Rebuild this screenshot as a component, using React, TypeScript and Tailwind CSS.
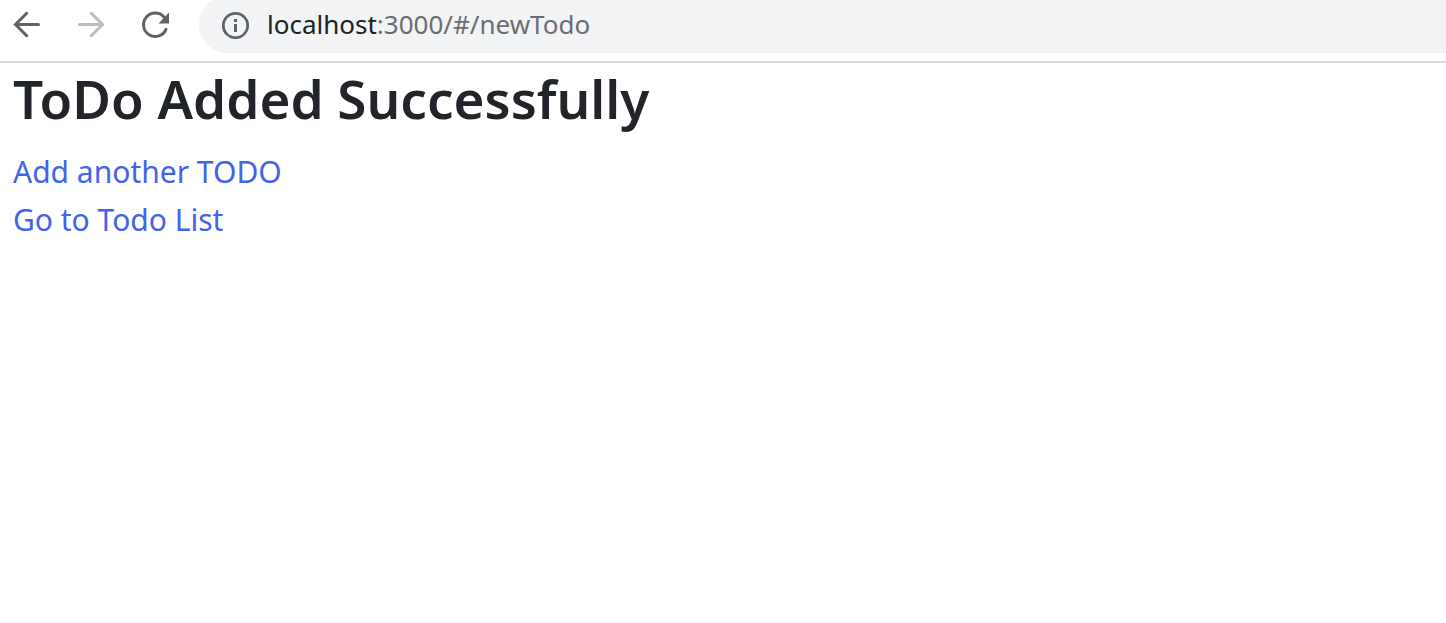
import React from "react";

function BackIcon() {
  return (
    <svg width="32" height="32" viewBox="0 0 32 32" fill="none" stroke="currentColor" strokeWidth="3" strokeLinecap="round" aria-hidden="true">
      <path d="M27.500 16.500H4.500M15.700 5.300L4.500 16.500l11.200 11.200" />
    </svg>
  );
}

function ForwardIcon() {
  return (
    <svg width="32" height="32" viewBox="0 0 32 32" fill="none" stroke="currentColor" strokeWidth="3" strokeLinecap="round" aria-hidden="true">
      <path d="M4.500 16.500h23M16.300 5.300L27.500 16.500L16.300 27.700" />
    </svg>
  );
}

function ReloadIcon() {
  return (
    <svg width="32" height="32" viewBox="0 0 32 32" fill="none" aria-hidden="true">
      <path d="M27 21.300A11.700 11.700 0 1 1 25 9" stroke="currentColor" strokeWidth="3" strokeLinecap="round" />
      <path d="M30 4.500V15.500H19.500z" fill="currentColor" />
    </svg>
  );
}

function InfoIcon() {
  return (
    <svg width="28" height="28" viewBox="0 0 28 28" fill="none" aria-hidden="true">
      <circle cx="14.500" cy="14.500" r="12.200" stroke="currentColor" strokeWidth="2.800" />
      <path d="M13 8h3v3h-3zM13 13h3v8h-3z" fill="currentColor" />
    </svg>
  );
}

export default function App() {
  return (
    <div className="min-h-screen overflow-hidden bg-white font-['Segoe_UI','Noto_Sans',sans-serif]">
      <header className="flex items-start border-b-2 border-[#dadce0] pb-2 pl-[11px]">
        <nav aria-label="Browser" className="flex gap-8 pt-2 pr-7 text-[#5f6368]">
          <button type="button" aria-label="Back">
            <BackIcon />
          </button>
          <button type="button" aria-label="Forward" disabled className="text-[#babcbe]">
            <ForwardIcon />
          </button>
          <button type="button" aria-label="Reload">
            <ReloadIcon />
          </button>
        </nav>
        <div className="-mt-1 flex h-[57px] flex-1 items-center gap-[18px] rounded-l-full bg-[#f1f3f4] pl-[22px] text-[26px] text-[#6b6e71]">
          <button type="button" aria-label="View site information" className="text-[#5f6368]">
            <InfoIcon />
          </button>
          <p className="whitespace-nowrap">
            <span className="text-[#202124]">localhost</span>:3000/#/newTodo
          </p>
        </div>
      </header>
      <main className="px-[13px] pt-[3px]">
        <h1 className="mb-4 text-[53px] leading-[66px] font-semibold text-[#212529]">
          ToDo Added Successfully
        </h1>
        <ul className="text-[30px] leading-[48px] text-[#4263eb]">
          <li>
            <a href="#/newTodo">Add another TODO</a>
          </li>
          <li>
            <a href="#/todos">Go to Todo List</a>
          </li>
        </ul>
      </main>
    </div>
  );
}
